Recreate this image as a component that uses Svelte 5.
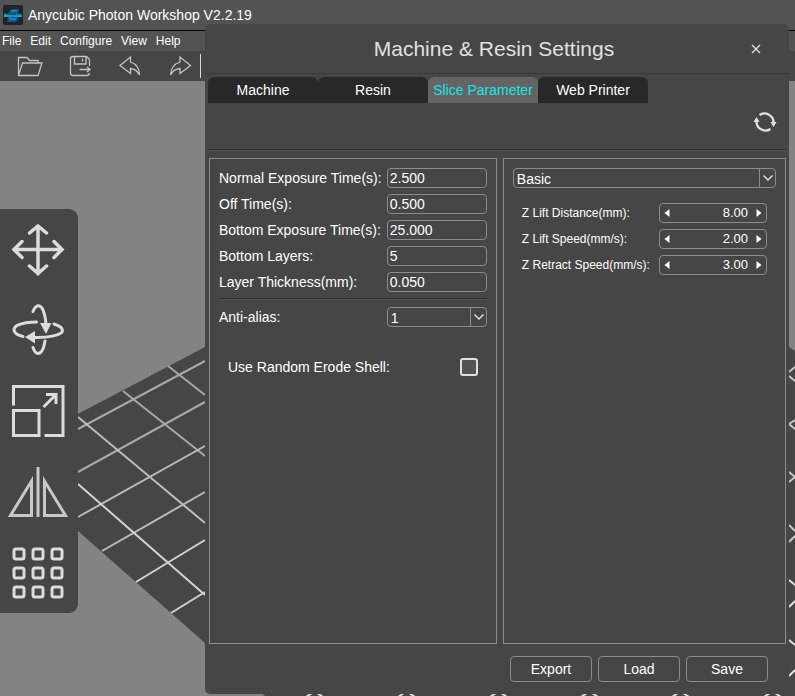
<script>
  const menus = ['File', 'Edit', 'Configure', 'View', 'Help'];
  const tabs = ['Machine', 'Resin', 'Slice Parameter', 'Web Printer'];
  let activeTab = $state('Slice Parameter');

  let exposure = $state([
    { id: 'normal', label: 'Normal Exposure Time(s):', value: '2.500' },
    { id: 'off', label: 'Off Time(s):', value: '0.500' },
    { id: 'bottom', label: 'Bottom Exposure Time(s):', value: '25.000' },
    { id: 'layers', label: 'Bottom Layers:', value: '5' },
    { id: 'thickness', label: 'Layer Thickness(mm):', value: '0.050' }
  ]);
  let antiAlias = $state('1');
  let erode = $state(false);
  let mode = $state('Basic');

  let motion = $state([
    { id: 'lift', label: 'Z Lift Distance(mm):', value: '8.00' },
    { id: 'speed', label: 'Z Lift Speed(mm/s):', value: '2.00' },
    { id: 'retract', label: 'Z Retract Speed(mm/s):', value: '3.00' }
  ]);
  const step = (row, by) => (row.value = Math.max(0, Number(row.value) + by).toFixed(2));

  const floorMarks = [308, 400, 492, 583, 674, 766];
  const cells = [553, 572, 591].flatMap((y) => [19, 38, 57].map((x) => ({ x, y })));
</script>

<div class="app">
  <header class="titlebar">
    <svg class="logo" viewBox="0 0 20 20" aria-hidden="true">
      <rect width="20" height="20" rx="2" fill="#20242a" />
      <path d="M6 6.500 9 4h7l-1 4 1 1-1 6-3 2H4l1-5-1-1z" fill="#17548f" />
      <path d="M8 6h6M6 14h7" stroke="#2f7fd0" stroke-width="1.500" />
      <path d="M1 8.500h18v3.500H1z" fill="#0d5f78" />
      <text x="10" y="12" text-anchor="middle" font-size="4" font-weight="bold" fill="#25d5e4">Anycubic</text>
    </svg>
    <span>Anycubic Photon Workshop V2.2.19</span>
  </header>

  <nav class="menubar">
    {#each menus as item}<button>{item}</button>{/each}
  </nav>

  <div class="toolbar">
    <button aria-label="Open">
      <svg viewBox="15 51 30 30"><path d="M18.500 75V57.500H27l2.500 3h8.500v2.500M22.500 63H42l-4 12.500H18.500z" /></svg>
    </button>
    <button aria-label="Save">
      <svg viewBox="65 51 30 30"><path d="M89.500 66v-6.500l-3-3h-13.500q-2.500 0-2.500 2.500v14q0 2.500 2.500 2.500h14q2 0 2.500-2.500M74.500 57v7h11.500v-7M82.500 59v2.500M79.500 69.500h10M87 67l3 2.500-3 2.500" /></svg>
    </button>
    <button aria-label="Undo">
      <svg viewBox="115 51 30 30"><path d="M120 65.500 130.500 57v5q9 3 9 13-3-6-9-6.500v5z" /></svg>
    </button>
    <button aria-label="Redo">
      <svg viewBox="165 51 30 30"><path d="M190.500 65.500 180 57v5q-9 3-9.500 13 3-6 9.500-6.500v5z" /></svg>
    </button>
    <span class="divider"></span>
  </div>

  <main class="scene">
    <svg class="floor" viewBox="0 81 795 615" preserveAspectRatio="xMinYMin slice" aria-hidden="true">
      <path d="M0 455 205 347 400 244 600 244 789 347l6 4V696H265L205 643 78 531 0 462z" fill="#464646" />
      <g fill="none" stroke-width="2">
        <path stroke="#a8a8a8" d="M78 429 205 361M78 472 205 402M168 366 205 395M123 391 205 456" />
        <path stroke="#bcbcbc" d="M78 517 205 446M102 551 205 492M78 417 205 523" />
        <path stroke="#d2d2d2" d="M136 582 205 540M171 613 205 592M78 484 205 595" />
        <path stroke="#c8c8c8" d="M789 372l6-5M789 376l6 5M789 424l6-4M789 424l6 5M789 472l6 5-6 5M789 525l6 6M789 542l6-6" />
        <path stroke="#dedede" d="M789 580l6 5M789 607l6-6M789 640l6 5M789 676l6-6" />
        {#each floorMarks as x}
          <path stroke="#dedede" d="M{x - 2} 697 l6 -4 M{x + 9} 693 l6 4" />
        {/each}
      </g>
    </svg>

    <aside class="tools">
      <button aria-label="Move">
        <svg viewBox="8 219 60 60"><path d="M38 226v48M14 249.500h48M29.500 233l8.500-7 8.500 7M29.500 266l8.500 7.500 8.500-7.500M22 241.500l-8 8 8 8M54 241.500l8 8-8 8" /></svg>
      </button>
      <button aria-label="Rotate">
        <svg viewBox="8 300 60 60">
          <path class="orbit" d="M33 311.500C36 304 40 305 42 308Q45 313 46 324M36.500 322C20 322.500 14 326 14 330Q14 334 23 336.500M54 324C60 326 62.500 328 62.500 330.500 62.500 335 48 338 34 337.500M45 341Q43 353.500 38 353.500 35 353.500 33 347.500" />
          <path class="solid" d="M40 323h11.500L46 334zM25 337l10-6v12.500z" />
        </svg>
      </button>
      <button aria-label="Scale">
        <svg viewBox="8 381 60 60"><path class="square" d="M13.500 405.500V386.500H63v49H44.500M13.500 410.500H39v25H13.500zM43.500 407 56 394.500M46 394.500H56V404" /></svg>
      </button>
      <button aria-label="Mirror">
        <svg viewBox="8 461 60 60"><path class="mirror" d="M38 466v50M31.500 480v34.500H10.500zM44.500 480v34.500H65.500z" /></svg>
      </button>
      <button aria-label="Layout">
        <svg viewBox="8 542 60 60">
          {#each cells as c}<rect x={c.x - 5} y={c.y - 5} width="10" height="10" rx="2" />{/each}
        </svg>
      </button>
    </aside>
  </main>

  <section class="dialog" aria-labelledby="dialog-title">
    <header class="heading">
      <h1 id="dialog-title">Machine &amp; Resin Settings</h1>
      <button class="close" aria-label="Close">
        <svg viewBox="0 0 10 10"><path d="M1 1l8 8M9 1L1 9" /></svg>
      </button>
    </header>

    <div class="tabs" role="tablist">
      {#each tabs as tab}
        <button role="tab" aria-selected={activeTab === tab} class:active={activeTab === tab} onclick={() => (activeTab = tab)}>{tab}</button>
      {/each}
    </div>

    <div class="actions">
      <button aria-label="Refresh">
        <svg viewBox="753 110 24 24">
          <path d="M759.500 115A9 9 0 0 1 773.500 123M770.500 129A9 9 0 0 1 756.500 121" />
          <path class="solid" d="M770.500 122h6l-3 5zM753.500 122h6l-3-5z" />
        </svg>
      </button>
    </div>

    <div class="panels">
      <div class="panel left">
        {#each exposure as row}
          <div class="row">
            <label for={row.id}>{row.label}</label>
            <input class="box" id={row.id} type="text" bind:value={row.value} />
          </div>
        {/each}
        <hr />
        <div class="row">
          <label for="aa">Anti-alias:</label>
          <span class="select short">
            <select class="box" id="aa" bind:value={antiAlias}>
              <option>1</option><option>2</option><option>4</option><option>8</option>
            </select>
            <svg viewBox="0 0 16 18" aria-hidden="true"><path d="M3.500 6.500 8 11l4.500-4.500" /></svg>
          </span>
        </div>
        <div class="row erode">
          <label for="erode">Use Random Erode Shell:</label>
          <input id="erode" type="checkbox" bind:checked={erode} />
        </div>
      </div>

      <div class="panel right">
        <span class="select">
          <select class="box" aria-label="Parameter mode" bind:value={mode}>
            <option>Basic</option><option>Advanced</option>
          </select>
          <svg viewBox="0 0 16 18" aria-hidden="true"><path d="M3.500 6.500 8 11l4.500-4.500" /></svg>
        </span>
        <div class="motion">
          {#each motion as row}
            <div class="row">
              <label for={row.id}>{row.label}</label>
              <span class="box spin">
                <button aria-label="Decrease" onclick={() => step(row, -1)}><svg viewBox="0 0 6 8"><path d="M5.500 0v8L0.500 4z" /></svg></button>
                <input id={row.id} type="text" inputmode="decimal" bind:value={row.value} />
                <button aria-label="Increase" onclick={() => step(row, 1)}><svg viewBox="0 0 6 8"><path d="M0.500 0v8l5-4z" /></svg></button>
              </span>
            </div>
          {/each}
        </div>
      </div>
    </div>

    <footer>
      <button class="box">Export</button>
      <button class="box">Load</button>
      <button class="box">Save</button>
    </footer>
  </section>
</div>

<style>
  :global(body) { margin: 0; background: #828482; }
  .app, .app * { box-sizing: border-box; }
  .app {
    position: relative;
    display: flex;
    flex-direction: column;
    min-height: 100vh;
    overflow: hidden;
    color: #fff;
    font: 14px/20px "Liberation Sans", Arial, sans-serif;
  }
  button, input, select { font: inherit; color: inherit; margin: 0; padding: 0; border: 0; background: none; }
  svg { display: block; }

  .titlebar { display: flex; align-items: center; gap: 5px; height: 31px; padding-left: 3px; background: #535353; border-bottom: 1px solid #000; }
  .logo { width: 20px; height: 20px; }
  .menubar { display: flex; gap: 9px; height: 20px; padding-left: 2px; background: #535353; font-size: 12px; }
  .toolbar { display: flex; align-items: center; height: 30px; padding-left: 5px; background: #464646; }
  .toolbar button { display: flex; justify-content: center; width: 50px; }
  .toolbar svg { width: 30px; height: 30px; }
  .toolbar path { fill: none; stroke: #c4c4c4; stroke-width: 1.3; }
  .toolbar .divider { width: 1px; height: 24px; margin-left: -5px; background: #d8d8d8; }

  .scene { position: relative; flex: 1; background: #828482; }
  .floor { position: absolute; inset: 0; width: 100%; height: 100%; }
  .tools { position: absolute; top: 128px; left: 0; display: flex; flex-direction: column; width: 78px; height: 404px; background: #464646; border-radius: 0 9px 9px 0; }
  .tools button { flex: 1; display: flex; align-items: center; justify-content: center; padding-right: 2px; }
  .tools svg { width: 60px; height: 60px; }
  .tools path, .tools rect { fill: none; stroke: #dcdcdc; stroke-width: 3.5; stroke-linecap: round; }
  .tools rect { stroke-width: 3; }
  .tools .orbit { stroke-width: 3; }
  .tools .solid { fill: #dcdcdc; stroke: none; }
  .tools .square { stroke-width: 3; stroke-linecap: butt; }
  .tools .mirror { stroke: #c8c8c8; stroke-width: 3; stroke-linecap: butt; }

  .dialog { position: absolute; top: 24px; right: 6px; bottom: 2px; left: 205px; display: flex; flex-direction: column; background: #464646; border-radius: 5px; }
  .heading { display: grid; grid-template-columns: 1fr auto 1fr; align-items: center; height: 50px; padding-right: 28px; padding-left: 22px; border-bottom: 1px solid #3a3a3a; }
  h1 { grid-column: 2; margin: 0; color: #e0e0e0; font-size: 21px; font-weight: normal; line-height: 24px; }
  .close { justify-self: end; }
  .close svg { width: 10px; height: 10px; }
  .close path { stroke: #e0e0e0; stroke-width: 1.3; }
  .tabs { display: flex; padding: 3px 3px 0; }
  .tabs button { width: 110px; height: 26px; background: #282828; border-radius: 6px 6px 0 0; white-space: nowrap; }
  .tabs .active { background: #646464; color: #19e6e6; }
  .actions { display: flex; justify-content: flex-end; align-items: flex-start; height: 47px; margin: 0 3px; padding: 7px 9px 0; border-bottom: 1px solid #303030; box-shadow: 0 1px #535353; }
  .actions svg { width: 24px; height: 24px; }
  .actions path { fill: none; stroke: #e0e0e0; stroke-width: 2.3; }
  .actions .solid { fill: #e0e0e0; stroke: none; }

  .panels { flex: 1; display: flex; gap: 6px; padding: 8px 3px 0 4px; }
  .panel { min-width: 0; padding: 9px; border: 1px solid #8c8c8c; }
  .left { flex: 288 1 0; }
  .right { flex: 283 1 0; }
  .row { display: flex; align-items: center; justify-content: space-between; height: 20px; margin-bottom: 6px; }
  label { white-space: nowrap; }
  .box { height: 20px; border: 1px solid #8c8c8c; border-radius: 4px; }
  input.box { width: 100px; padding: 0 2px; }
  hr { height: 2px; margin: 6px 0 7px; border: 0; border-top: 1px solid #303030; border-bottom: 1px solid #535353; }
  .select { display: grid; }
  .select.short { width: 100px; }
  select { grid-area: 1 / 1; width: 100%; padding: 0 20px 2px 3px; appearance: none; }
  option { background: #464646; }
  .select svg { grid-area: 1 / 1; justify-self: end; align-self: center; width: 17px; height: 18px; border-left: 1px solid #8c8c8c; pointer-events: none; }
  .select path { fill: none; stroke: #e0e0e0; stroke-width: 1.5; }
  .erode { margin-top: 30px; padding: 0 9px; }
  input[type="checkbox"] { appearance: none; width: 18px; height: 18px; border: 2px solid #e0e0e0; border-radius: 3px; background: #535353; }
  input[type="checkbox"]:checked { background: #19e6e6; }
  .motion { margin-top: 15px; padding: 0 9px; font-size: 12px; }
  .spin { display: flex; align-items: center; width: 108px; padding: 0 4px; font-size: 13px; }
  .spin input { flex: 1; min-width: 0; padding-right: 8px; text-align: right; }
  .spin svg { width: 6px; height: 8px; }
  .spin path { fill: #fff; }
  footer { display: flex; justify-content: flex-end; gap: 6px; padding: 12px 21px; }
  footer .box { width: 82px; height: 26px; }
</style>
